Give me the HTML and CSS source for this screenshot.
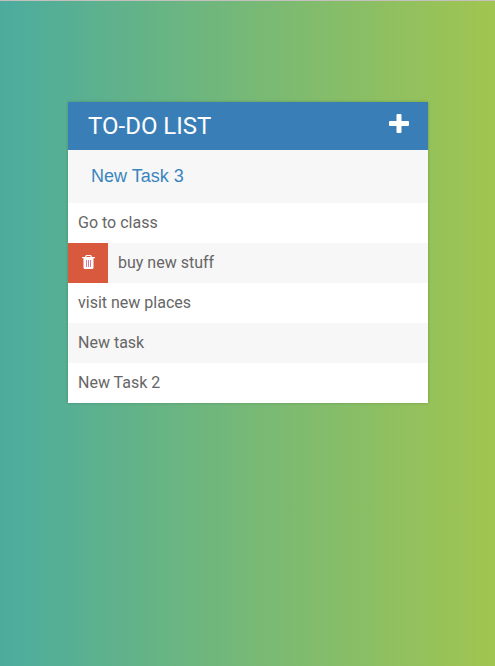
FILE: index.html
```html
<!DOCTYPE html>
<html lang="en">
<head>
<meta charset="utf-8">
<title>To-Do List</title>
<link rel="stylesheet" href="styles.css">
</head>
<body>
<div class="container">
<h1 class="title">To-Do List
<svg class="plus" viewBox="0 0 20 19" fill="currentColor"><path d="M8.500 0h3q1 0 1 1v6H19q1 0 1 1v3q0 1-1 1h-6.500v6q0 1-1 1h-3q-1 0-1-1v-6H1q-1 0-1-1V8q0-1 1-1h6.500V1q0-1 1-1z"/></svg></h1>
<input class="new-task" type="text" value="New Task 3" aria-label="New task">
<ul class="tasks">
<li class="task">Go to class</li>
<li class="task"><span class="delete"><svg class="trash" viewBox="0 0 13 14"><path fill="#fff" fill-rule="evenodd" d="M4.500 0h4q.7 0 1 .8L10 2h2.500q.5 0 .5.500T12.500 3.300H11.500V12.500Q11.500 14 10 14H3Q1.500 14 1.500 12.500V3.300H.5Q0 3.300 0 2.600T.5 2H3l.5-1.200Q3.800 0 4.500 0zM4.300 2h4.400l-.4-.9H4.700z"/><path stroke="#d77c9e" stroke-width="1" d="M4.500 5v7M6.500 5v7M8.500 5v7"/></svg></span>buy new stuff</li>
<li class="task">visit new places</li>
<li class="task">New task</li>
<li class="task">New Task 2</li>
</ul>
</div>
</body>
</html>
```
FILE: styles.css
```css
html { height: 100%; }
body {
  margin: 0;
  min-height: 100%;
  display: flow-root;
  box-sizing: border-box;
  padding-left: 1px;
  border-top: 1px solid #c4c0be;
  font-family: Roboto, sans-serif;
  background: linear-gradient(to right, #4bac9e, #a1c550);
}
.container {
  width: 360px;
  margin: 101px auto 0;
  background: #f7f7f7;
  box-shadow: 0 0 3px rgba(0, 0, 0, 0.2);
}
.title {
  display: flex;
  justify-content: space-between;
  margin: 0;
  padding: 10px 19px 10px 20px;
  height: 28px;
  line-height: 28px;
  font-size: 24px;
  font-weight: 400;
  text-transform: uppercase;
  color: #fff;
  background: #3a7eb7;
}
.plus { width: 20px; height: 19px; margin-top: 2px; }
.new-task {
  display: block;
  box-sizing: border-box;
  width: 100%;
  height: 53px;
  padding: 13px 13px 13px 20px;
  border: 3px solid transparent;
  background: #f7f7f7;
  color: #3a85bf;
  font: 18px "Liberation Sans", sans-serif;
}
.tasks { list-style: none; margin: 0; padding: 0; }
.task {
  display: flex;
  height: 40px;
  line-height: 40px;
  padding-left: 10px;
  font-size: 16px;
  color: #666;
  background: #fff;
}
.task:nth-child(2n) { background: #f7f7f7; }
.delete {
  display: flex;
  align-items: center;
  justify-content: center;
  width: 40px;
  margin: 0 10px 0 -10px;
  background: #d9593f;
}
.trash { width: 13px; height: 14px; margin: -2px 0 0 1px; }
```
